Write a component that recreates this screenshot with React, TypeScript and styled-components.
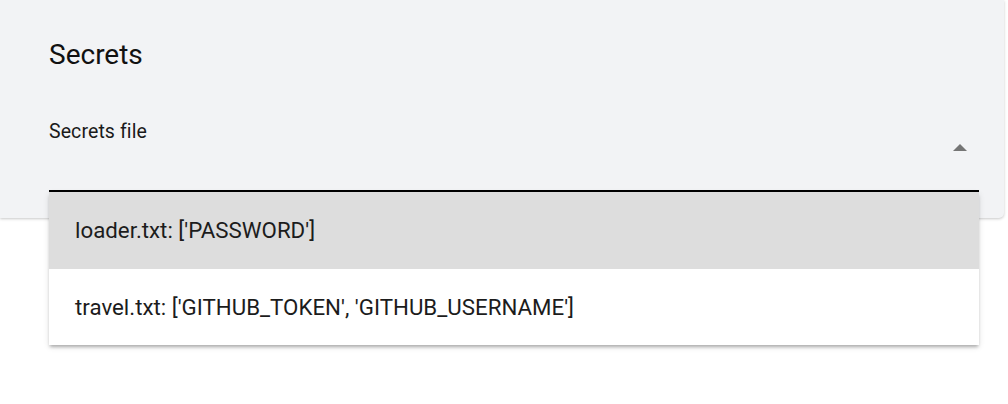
import { createGlobalStyle, styled } from 'styled-components';

const GlobalStyle = createGlobalStyle`
  html, body {
    margin: 0;
    padding: 0;
    background: #ffffff;
  }

  body {
    font-family: Roboto, 'Liberation Sans', Arial, sans-serif;
    color: rgba(0, 0, 0, 0.87);
  }
`;

const SECRET_FILES = [
  { name: 'loader.txt', keys: ['PASSWORD'] },
  { name: 'travel.txt', keys: ['GITHUB_TOKEN', 'GITHUB_USERNAME'] },
];

const formatKeys = (keys: string[]) => `[${keys.map((key) => `'${key}'`).join(', ')}]`;

const App = () => {
  return (
    <>
      <GlobalStyle />
      <Page>
        <Card>
          <Title>Secrets</Title>
          <Field>
            <Label>Secrets file</Label>
            <SelectRow>
              <ArrowUp viewBox="7 9 10 5" aria-hidden="true">
                <path d="M7 14l5-5 5 5z" />
              </ArrowUp>
            </SelectRow>
            <Menu>
              {SECRET_FILES.map((file, index) => (
                <MenuItem key={file.name} $selected={index === 0}>
                  {file.name}: {formatKeys(file.keys)}
                </MenuItem>
              ))}
            </Menu>
          </Field>
        </Card>
      </Page>
    </>
  );
};

export default App;

const Page = styled.div`
  width: 1008px;
  height: 404px;
  overflow: hidden;
`;

const Card = styled.section`
  box-sizing: border-box;
  width: 1004px;
  height: 218px;
  padding: 38px 25px 0 49px;

  background: #f2f3f5;
  border-bottom-right-radius: 5px;
  box-shadow: 0 1px 3px rgba(0, 0, 0, 0.22);
`;

const Title = styled.h2`
  margin: 0 0 49px;

  font-size: 28px;
  font-weight: 400;
  line-height: 33px;
  color: #111111;
`;

const Field = styled.div`
  position: relative;
`;

const Label = styled.label`
  display: block;

  font-size: 19.5px;
  font-weight: 400;
  line-height: 23px;
  color: #1a1a1a;
  letter-spacing: 0.1px;
`;

const SelectRow = styled.div`
  display: flex;
  align-items: flex-start;
  justify-content: flex-end;
  box-sizing: border-box;
  height: 49px;
  padding: 1px 12px 0 0;

  border-bottom: 2px solid #000000;
`;

const ArrowUp = styled.svg`
  width: 14px;
  height: 7px;

  fill: #757575;
`;

const Menu = styled.ul`
  position: absolute;
  top: 100%;
  left: 0;
  right: 0;

  margin: 0;
  padding: 0;
  list-style: none;

  background: #ffffff;
  box-shadow:
    0 3px 3px -1px rgba(0, 0, 0, 0.25),
    0 2px 6px 0 rgba(0, 0, 0, 0.12);
`;

const MenuItem = styled.li<{ $selected: boolean }>`
  display: flex;
  align-items: center;
  box-sizing: border-box;
  height: 76.5px;
  padding: 0 26px;

  font-size: 22.3px;
  line-height: 26px;
  color: #1c1c1c;
  background: ${({ $selected }) => ($selected ? '#dddddd' : '#ffffff')};
`;
